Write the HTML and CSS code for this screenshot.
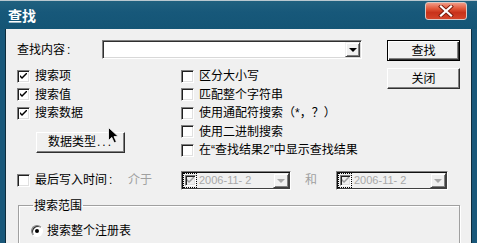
FILE: index.html
```html
<!DOCTYPE html>
<html lang="zh-CN">
<head>
<meta charset="utf-8">
<title>查找</title>
<link rel="stylesheet" href="styles.css">
</head>
<body>
<div class="window">
  <div class="titlebar">
    <span class="title">查找</span>
    <div class="close">
      <svg width="16" height="12" viewBox="0 0 16 12"><path d="M3 1.5 L13 10.5 M13 1.5 L3 10.5" stroke="#7a1a0a" stroke-width="4" stroke-linecap="square"/><path d="M3 1.5 L13 10.5 M13 1.5 L3 10.5" stroke="#fff" stroke-width="2.2" stroke-linecap="square"/></svg>
    </div>
  </div>
  <div class="frame">
    <div class="client">
      <div class="top">
        <div class="main">
          <div class="find-row">
            <span class="find-label">查找内容<span class="colon">:</span></span>
            <div class="combo">
              <div class="drop-btn"><span class="arrow"></span></div>
            </div>
          </div>
          <div class="options">
            <div class="col-left">
              <div class="check-row"><span class="check on"></span><span>搜索项</span></div>
              <div class="check-row"><span class="check on"></span><span>搜索值</span></div>
              <div class="check-row"><span class="check on"></span><span>搜索数据</span></div>
              <div class="btn type-btn">数据类型<span class="dots">...</span>
                <svg class="cursor" width="12" height="18" viewBox="0 0 12 18"><path d="M0.5 0.5 L0.5 13.5 L3.8 10.4 L6.2 15.8 L8.4 14.8 L6 9.6 L10.3 9.6 Z" fill="#000" stroke="#fff" stroke-width="0.8"/></svg>
              </div>
            </div>
            <div class="col-right">
              <div class="check-row"><span class="check"></span><span>区分大小写</span></div>
              <div class="check-row"><span class="check"></span><span>匹配整个字符串</span></div>
              <div class="check-row"><span class="check"></span><span>使用通配符搜索（*，？）</span></div>
              <div class="check-row"><span class="check"></span><span>使用二进制搜索</span></div>
              <div class="check-row"><span class="check"></span><span>在“查找结果2”中显示查找结果</span></div>
            </div>
          </div>
        </div>
        <div class="buttons">
          <div class="btn default">查找</div>
          <div class="btn">关闭</div>
        </div>
      </div>
      <div class="time-row">
        <div class="check-row time-check"><span class="check"></span><span>最后写入时间<span class="colon">:</span></span></div>
        <span class="muted between">介于</span>
        <div class="picker p1">
          <span class="focus"><span class="check mini on"></span></span>
          <span class="date">2006-11- 2</span>
          <div class="drop-btn"><span class="arrow gray"></span></div>
        </div>
        <span class="muted and">和</span>
        <div class="picker p2">
          <span class="focus"><span class="check mini on"></span></span>
          <span class="date">2006-11- 2</span>
          <div class="drop-btn"><span class="arrow gray"></span></div>
        </div>
      </div>
      <fieldset class="group">
        <legend>搜索范围</legend>
        <div class="radio-row"><span class="radio"></span><span>搜索整个注册表</span></div>
      </fieldset>
    </div>
  </div>
</div>
</body>
</html>
```
FILE: styles.css
```css
* { box-sizing: border-box; }
body {
  margin: 0;
  background: #fff;
  font-family: "Liberation Sans", "Noto Sans CJK SC", sans-serif;
  font-size: 12px;
  color: #000;
}
.window {
  width: 477px;
  height: 243px;
  overflow: hidden;
  display: flex;
  flex-direction: column;
  background: #19587a;
}
.titlebar {
  height: 29px;
  flex: none;
  display: flex;
  justify-content: space-between;
  align-items: flex-start;
  padding: 0 10px 0 8px;
  border-top: 1px solid #b9c7cf;
  background: linear-gradient(to bottom, #21617f 0%, #17587a 40%, #145575 100%);
}
.title {
  color: #fff;
  font-family: "Noto Sans CJK SC", sans-serif;
  font-weight: bold;
  font-size: 14px;
  line-height: 14px;
  margin-top: 7px;
}
.close {
  width: 42px;
  height: 18px;
  margin-top: 1px;
  border: 1px solid #d9c8c4;
  border-radius: 3px;
  background: linear-gradient(to bottom, #f09a86 0%, #e2583a 35%, #c8321a 60%, #d4442a 100%);
  display: flex;
  align-items: center;
  justify-content: center;
}
.frame {
  flex: 1;
  display: flex;
  padding: 0 5px;
}
.client {
  flex: 1;
  background: #f0f0f0;
  border-left: 1px solid #0d2c3c;
  border-right: 1px solid #0d2c3c;
  padding: 11px 0 0 11px;
}
.top { display: flex; }
.main { width: 345px; }
.find-row {
  display: flex;
  align-items: center;
  height: 19px;
}
.find-label { width: 85px; line-height: 14px; }
.colon { padding-left: 2px; }
.combo {
  width: 260px;
  height: 19px;
  background: #fff;
  border-top: 1px solid #808080;
  border-left: 1px solid #808080;
  border-right: 1px solid #fff;
  border-bottom: 1px solid #fff;
  box-shadow: inset 1px 1px #303030, inset -1px -1px #d8d8d8;
  display: flex;
  justify-content: flex-end;
  padding: 1px;
}
.drop-btn {
  width: 15px;
  height: 15px;
  background: #f0f0f0;
  border-top: 1px solid #f0f0f0;
  border-left: 1px solid #f0f0f0;
  border-right: 1px solid #404040;
  border-bottom: 1px solid #404040;
  box-shadow: inset 1px 1px #fff, inset -1px -1px #808080;
  display: flex;
  align-items: center;
  justify-content: center;
}
.arrow {
  width: 0;
  height: 0;
  border-left: 4px solid transparent;
  border-right: 4px solid transparent;
  border-top: 4px solid #000;
  margin-top: 1px;
}
.arrow.gray { border-top-color: #a8a8a8; }
.options {
  display: flex;
  margin-top: 8px;
}
.col-left { width: 164px; }
.check-row {
  height: 18.5px;
  display: flex;
  align-items: center;
  gap: 5px;
  line-height: 14px;
  white-space: nowrap;
}
.check {
  width: 13px;
  height: 13px;
  flex: none;
  background: #fff;
  border-top: 1px solid #808080;
  border-left: 1px solid #808080;
  border-right: 1px solid #fff;
  border-bottom: 1px solid #fff;
  box-shadow: inset 1px 1px #202020, inset -1px -1px #e0e0e0;
  position: relative;
}
.check.on::after {
  content: "";
  position: absolute;
  left: 2px;
  top: 2px;
  width: 7px;
  height: 7px;
  background: no-repeat center/7px 7px url("data:image/svg+xml;utf8,<svg xmlns='http://www.w3.org/2000/svg' width='7' height='7' viewBox='0 0 7 7'><path d='M0 2 L0 4 L2 6 L7 1 L7 -1 L2 4 Z' fill='black'/></svg>");
}
.btn {
  width: 73px;
  height: 21px;
  background: #f0f0f0;
  border-top: 1px solid #fff;
  border-left: 1px solid #fff;
  border-right: 1px solid #303030;
  border-bottom: 1px solid #303030;
  box-shadow: inset -1px -1px #808080;
  display: flex;
  align-items: center;
  justify-content: center;
  line-height: 14px;
}
.btn.default {
  border: 1px solid #000;
  box-shadow: inset 1px 1px #fff, inset -1px -1px #303030, inset -2px -2px #808080;
}
.buttons {
  margin-left: 25px;
  display: flex;
  flex-direction: column;
  gap: 7px;
}
.type-btn {
  width: 89px;
  margin-top: 9px;
  margin-left: 19px;
  justify-content: flex-start;
  padding-left: 11px;
  position: relative;
}
.dots { letter-spacing: 2px; padding-left: 1px; }
.cursor {
  position: absolute;
  left: 71px;
  top: -6px;
}
.time-row {
  display: flex;
  align-items: center;
  margin-top: 11px;
  height: 19px;
}
.time-check { width: 111px; }
.muted { color: #a0a0a0; line-height: 14px; }
.between { width: 53px; }
.and { width: 45px; padding-left: 14px; }
.picker {
  height: 19px;
  display: flex;
  align-items: center;
  background: #f0f0f0;
  border-top: 1px solid #808080;
  border-left: 1px solid #808080;
  border-right: 1px solid #fff;
  border-bottom: 1px solid #fff;
  box-shadow: inset 1px 1px #101010, inset -1px -1px #404040;
  padding: 1px;
}
.p1 { width: 110px; }
.p2 { width: 112px; }
.focus {
  width: 14px;
  height: 15px;
  outline: 1px dotted #000;
  outline-offset: -1px;
  display: flex;
  align-items: center;
  justify-content: center;
  flex: none;
}
.check.mini {
  width: 11px;
  height: 11px;
  background: #f0f0f0;
}
.check.mini.on::after {
  left: 1px;
  top: 1px;
  opacity: 0.35;
}
.date {
  flex: 1;
  font-size: 11px;
  line-height: 13px;
  color: #a8a8a8;
  padding-left: 2px;
  white-space: pre;
}
.picker .drop-btn { width: 16px; }
.group {
  margin: 9px 0 0 1px;
  width: 442px;
  height: 60px;
  padding: 10px 0 0 12px;
  border: 1px solid #a0a0a0;
  box-shadow: inset 1px 1px #fff, 1px 1px #fff;
  min-inline-size: 0;
}
.group legend {
  padding: 0 1px;
  margin-left: 2px;
  line-height: 14px;
}
.radio-row {
  display: flex;
  align-items: center;
  gap: 4px;
  height: 16px;
  line-height: 14px;
}
.radio {
  width: 12px;
  height: 12px;
  border-radius: 50%;
  background: #fff;
  border: 1px solid;
  border-color: #808080 #fff #fff #808080;
  box-shadow: inset 1px 1px #303030;
  display: flex;
  align-items: center;
  justify-content: center;
  flex: none;
}
.radio::after {
  content: "";
  width: 4px;
  height: 4px;
  border-radius: 50%;
  background: #000;
}
```
